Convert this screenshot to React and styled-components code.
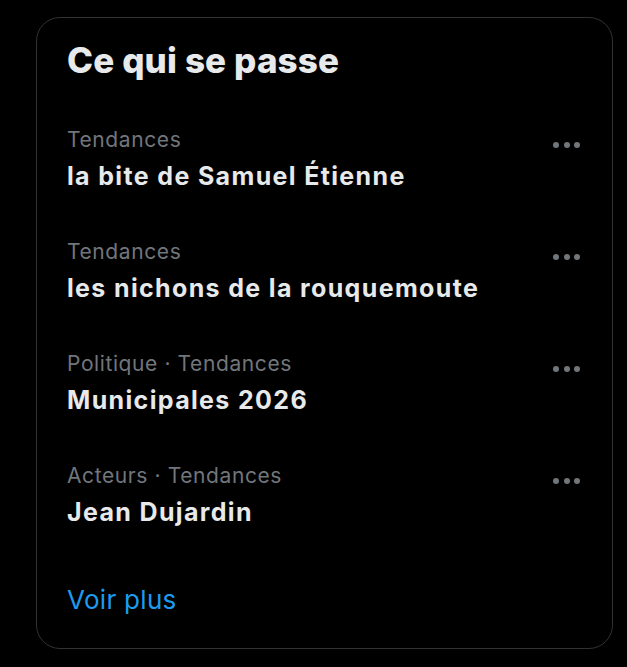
import React from "react";
import styled, {createGlobalStyle} from "styled-components";

const trends = [
    {category: "Tendances", name: "la bite de Samuel Étienne"},
    {category: "Tendances", name: "les nichons de la rouquemoute"},
    {category: "Politique · Tendances", name: "Municipales 2026"},
    {category: "Acteurs · Tendances", name: "Jean Dujardin"},
];

const App = () => {
  return (
    <>
      <GlobalStyle/>
      <Card>
        <Title>Ce qui se passe</Title>
        {trends.map((trend) => (
          <TrendRow key={trend.name}>
            <TrendText>
              <Category>{trend.category}</Category>
              <TrendName>{trend.name}</TrendName>
            </TrendText>
            <MoreButton aria-label="Plus">
              <Dot/><Dot/><Dot/>
            </MoreButton>
          </TrendRow>
        ))}
        <ShowMore href="#">Voir plus</ShowMore>
      </Card>
    </>
  )
}

const GlobalStyle = createGlobalStyle`
  html, body {
    margin: 0;
    background: #000;
  }
  body {
    font-family: Inter, "Noto Sans", sans-serif;
    color: #e7e9ea;
  }
`;

const Card = styled.section`
  box-sizing: border-box;
  width: 577px;
  height: 632px;
  margin: 17px 0 0 36px;
  border: 1px solid #2f3336;
  border-radius: 24px;
  display: flex;
  flex-direction: column;
`;

const Title = styled.h2`
  margin: 0;
  padding: 22px 30px 31px;
  font-size: 35px;
  line-height: 40px;
  font-weight: 800;
  letter-spacing: 0.15px;
  color: #e7e9ea;
`;

const TrendRow = styled.div`
  display: flex;
  justify-content: space-between;
  align-items: flex-start;
  padding: 16px 30px 32px;
  height: 112px;
  box-sizing: border-box;
`;

const TrendText = styled.div`
  display: flex;
  flex-direction: column;
  gap: 8px;
`;

const Category = styled.span`
  font-size: 21px;
  line-height: 26px;
  letter-spacing: 0.6px;
  color: #71767b;
`;

const TrendName = styled.span`
  font-size: 25px;
  line-height: 30px;
  font-weight: 700;
  letter-spacing: 1.35px;
  color: #e7e9ea;
`;

const MoreButton = styled.div`
  display: flex;
  gap: 4.5px;
  margin-top: 15px;
  margin-right: 2px;
`;

const Dot = styled.span`
  width: 6px;
  height: 6px;
  border-radius: 50%;
  background: #71767b;
`;

const ShowMore = styled.a`
  padding: 25px 30px 0;
  font-size: 26px;
  line-height: 32px;
  letter-spacing: 0.3px;
  color: #1d9bf0;
  text-decoration: none;
`;

export default App;
